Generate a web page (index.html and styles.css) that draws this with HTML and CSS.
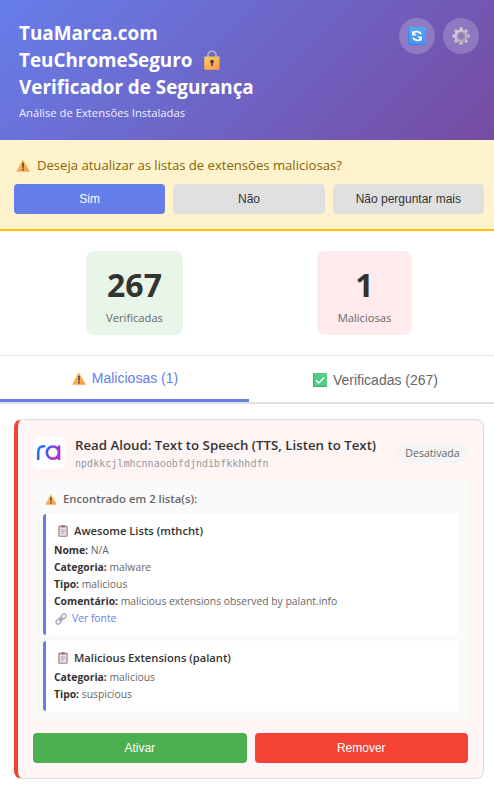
FILE: index.html
```
<!DOCTYPE html>
<html lang="pt">
<head>
<meta charset="utf-8">
<title>TeuChromeSeguro</title>
<link rel="stylesheet" href="styles.css">
</head>
<body>
<svg class="defs" width="0" height="0" aria-hidden="true">
  <defs>
    <linearGradient id="amber" x1="0" y1="0" x2="0.6" y2="1"><stop offset="0" stop-color="#fcd05a"/><stop offset="1" stop-color="#fb9f4c"/></linearGradient>
    <linearGradient id="blue" x1="0" y1="0" x2="0" y2="1"><stop offset="0" stop-color="#50a8f8"/><stop offset="1" stop-color="#4a90ee"/></linearGradient>
    <linearGradient id="steel" x1="0" y1="0" x2="1" y2="1"><stop offset="0" stop-color="#d9d2e2"/><stop offset="1" stop-color="#a79db4"/></linearGradient>
    <linearGradient id="brand" x1="0" y1="0" x2="1" y2="0.4"><stop offset="0" stop-color="#0a84ff"/><stop offset="0.5" stop-color="#4b55e8"/><stop offset="1" stop-color="#b52fd0"/></linearGradient>
    <symbol id="warn" viewBox="0 0 14 13">
      <path d="M7 .5 13.5 12Q13.8 12.7 13 12.7H1Q.2 12.7.5 12L6.2 1Q7-.1 7.8 1Z" fill="url(#amber)"/>
      <path d="M7 4.2v4" stroke="#4a3b48" stroke-width="1.5" stroke-linecap="round"/>
      <circle cx="7" cy="10.5" r=".9" fill="#4a3b48"/>
    </symbol>
    <symbol id="clip" viewBox="0 0 10 12">
      <rect x=".3" y=".8" width="9.4" height="11" rx=".8" fill="#b47c6d"/>
      <rect x="1.5" y="2" width="7" height="8.8" fill="#e5dff0"/>
      <rect x="3" y="0" width="4" height="2.7" rx=".7" fill="#8e829c"/>
      <path d="M2.7 4.7h4.6M2.7 6.5h4.6M2.7 8.3h3" stroke="#a89eb8" stroke-width=".8"/>
    </symbol>
  </defs>
</svg>

<header class="header">
  <div>
    <h1 class="title">TuaMarca.com<br>TeuChromeSeguro<svg class="lock" viewBox="0 0 16 20"><path d="M4 8V5.2a4 4 0 0 1 8 0V8" fill="none" stroke="#b4acbd" stroke-width="1.8"/><rect x=".3" y="6.4" width="15.2" height="13.3" rx="1" fill="url(#amber)"/><circle cx="8" cy="11.6" r="1.9" fill="#47384d"/><path d="M7.2 12h1.6v4H7.2z" fill="#47384d"/></svg><br>Verificador de Segurança</h1>
    <p class="subtitle">Análise de Extensões Instaladas</p>
  </div>
  <div class="tools">
    <button class="tool" aria-label="Atualizar">
      <svg width="18" height="18" viewBox="0 0 18 18"><rect width="18" height="18" rx="1.8" fill="url(#blue)"/><path d="M.4 1v15.5q.2 1 1.2 1h15" fill="none" stroke="#3d7fd2" stroke-width=".8"/><path d="M5.2 5.6A5 4.4 0 0 1 13 7.2M12.8 12.2A5 4.4 0 0 1 5 10.8" fill="none" stroke="#fff" stroke-width="1.8"/><path d="M4 3.8v4.6h4.8ZM14 14V9.4H9.2Z" fill="#fff"/></svg>
    </button>
    <button class="tool" aria-label="Definições">
      <svg width="18" height="18" viewBox="-9 -9 18 18"><g fill="#cbc2d6"><circle cy="-7.1" r="1.8"/><circle cx="5" cy="-5" r="1.8"/><circle cx="7.1" r="1.8"/><circle cx="-7.1" r="1.8"/><circle cx="-5" cy="-5" r="1.8"/><circle cx="-5" cy="5" r="1.8"/><circle cx="5" cy="5" r="1.8"/><circle cy="7.1" r="1.8"/></g><circle r="4.7" fill="none" stroke="url(#steel)" stroke-width="3.8"/><circle r="3.4" fill="none" stroke="#978ea4" stroke-width="1.2"/></svg>
    </button>
  </div>
</header>

<section class="banner">
  <p class="banner-text"><svg class="warn" width="14" height="13"><use href="#warn"/></svg>Deseja atualizar as listas de extensões maliciosas?</p>
  <div class="banner-actions">
    <button class="btn primary">Sim</button>
    <button class="btn">Não</button>
    <button class="btn">Não perguntar mais</button>
  </div>
</section>

<section class="stats">
  <div class="stat safe"><span class="num">267</span><span class="label">Verificadas</span></div>
  <div class="stat bad"><span class="num">1</span><span class="label">Maliciosas</span></div>
</section>

<nav class="tabs">
  <button class="tab active"><svg width="14" height="13"><use href="#warn"/></svg>Maliciosas (1)</button>
  <button class="tab"><svg width="14" height="14" viewBox="0 0 14 14"><rect width="14" height="14" rx=".8" fill="#50cd87"/><path d="M.3 0v13.7H14" fill="none" stroke="#399b6a" stroke-width=".8"/><path d="M3 7.3 5.8 10 11.2 4.4" fill="none" stroke="#fff" stroke-width="1.4"/></svg>Verificadas (267)</button>
</nav>

<main class="list">
  <article class="card">
    <div class="card-head">
      <div class="logo"><svg width="32" height="32" viewBox="0 0 32 32"><g fill="none" stroke="url(#brand)" stroke-width="2.6" stroke-linecap="round"><path d="M5.2 22V15.4Q5.2 8.9 11.2 9.2M26 9.5V22M26 15.6a6.1 6.1 0 1 1-12.2 0a6.1 6.1 0 1 1 12.2 0"/></g></svg></div>
      <div class="info">
        <h2 class="name">Read Aloud: Text to Speech (TTS, Listen to Text)</h2>
        <div class="id">npdkkcjlmhcnnaoobfdjndibfkkhhdfn</div>
      </div>
      <span class="badge">Desativada</span>
    </div>
    <div class="sources">
      <h3 class="found"><svg width="12" height="11"><use href="#warn"/></svg>Encontrado em 2 lista(s):</h3>
      <div class="source">
        <h4 class="source-name"><svg width="10" height="12"><use href="#clip"/></svg>Awesome Lists (mthcht)</h4>
        <p><strong>Nome:</strong> N/A</p>
        <p><strong>Categoria:</strong> malware</p>
        <p><strong>Tipo:</strong> malicious</p>
        <p><strong>Comentário:</strong> malicious extensions observed by palant.info</p>
        <a class="link"><svg width="12" height="12" viewBox="0 0 12 12" fill="none" stroke="#b5a9bd" stroke-width="1.5"><rect x="5.3" y="1.7" width="6" height="3.8" rx="1.9" transform="rotate(-45 8.3 3.6)"/><rect x=".7" y="6.4" width="6" height="3.8" rx="1.9" transform="rotate(-45 3.7 8.3)"/><path d="M4.2 7.8 7.8 4.2" stroke="#a095ac"/></svg>Ver fonte</a>
      </div>
      <div class="source">
        <h4 class="source-name"><svg width="10" height="12"><use href="#clip"/></svg>Malicious Extensions (palant)</h4>
        <p><strong>Categoria:</strong> malicious</p>
        <p><strong>Tipo:</strong> suspicious</p>
      </div>
    </div>
    <div class="card-actions">
      <button class="btn enable">Ativar</button>
      <button class="btn remove">Remover</button>
    </div>
  </article>
</main>
</body>
</html>
```
FILE: styles.css
```
* { box-sizing: border-box; margin: 0; padding: 0; }
body { font-family: "Open Sans", "Noto Sans", sans-serif; color: #333; background: #fff; white-space: nowrap; }
button { border: 0; font-family: "Liberation Sans", Arial, sans-serif; }
svg { flex: none; }
.defs { display: block; position: absolute; }

.header { display: flex; justify-content: space-between; height: 140px; padding: 20px 15px 0 19px; background: linear-gradient(135deg, #667eea 0%, #764ba2 100%); color: #fff; }
.title { font-size: 18.85px; line-height: 27px; font-weight: 700; height: 81px; }
.lock { width: 16px; height: 20px; margin-left: 12px; vertical-align: -3px; }
.subtitle { margin-top: 4px; font-size: 11.25px; line-height: 16px; opacity: .9; }
.tools { display: flex; gap: 8px; margin-top: -2px; }
.tool { display: flex; align-items: center; justify-content: center; width: 36px; height: 36px; border-radius: 50%; background: rgba(255, 255, 255, .2); }

.banner { height: 91px; padding: 14px 10px 0 14px; background: #fff3cd; border-bottom: 2px solid #ffc107; }
.banner-text { display: flex; align-items: center; height: 21px; padding-left: 2px; margin-bottom: 9px; font-size: 13.1px; color: #856404; }
.banner-text svg { margin: 2px 7px 0 0; }
.banner-actions { display: flex; gap: 8px; }
.btn { flex: 1 1 0; height: 30px; border-radius: 4px; font-size: 12px; background: #e0e0e0; color: #333; }
.btn.primary { background: #667eea; color: #fff; }

.stats { display: flex; justify-content: space-between; height: 125px; padding: 20px 82px 20px 86px; border-bottom: 1px solid #e0e0e0; }
.stat { display: flex; flex-direction: column; align-items: center; width: 97px; height: 84px; padding-top: 12px; border-radius: 8px; }
.stat.bad { width: 95px; }
.safe { background: #e8f5e9; }
.bad { background: #ffebee; }
.num { font-size: 32px; line-height: 43px; font-weight: 700; }
.label { margin-top: 4px; font-size: 11.2px; line-height: 16px; color: #666; }

.tabs { display: flex; height: 48px; border-bottom: 2px solid #e0e0e0; }
.tab { display: flex; align-items: center; justify-content: center; gap: 6px; width: 245px; padding: 2px 0 0 8px; background: none; font-size: 14px; color: #666; }
.tab.active { width: 249px; padding: 0 0 0 1px; border-bottom: 3px solid #667eea; color: #667eea; }
.tab.active svg { margin-top: 2px; }

.list { padding: 15px 10px 15px 14px; }
.card { height: 360px; padding: 17px 15px 15px; border: 1px solid #ddd; border-left: 4px solid #f44336; border-radius: 8px; background: #fff5f5; }
.card-head { display: flex; align-items: center; height: 32px; margin-bottom: 11px; }
.logo { width: 32px; height: 32px; border-radius: 5px; background: #fff; }
.info { flex: 1; margin-left: 10px; }
.name { font-size: 13.25px; line-height: 19px; font-weight: 600; }
.id { font: 10.05px/18px "DejaVu Sans Mono", monospace; margin-bottom: -2px; color: #999; }
.badge { width: 71px; height: 19px; border-radius: 10px; background: #f5f5f5; font-size: 10.55px; line-height: 19px; font-weight: 500; text-align: center; color: #666; }
.sources { height: 241px; padding: 10px; border-radius: 4px; background: #fafafa; }
.found { display: flex; align-items: center; gap: 6px; height: 16px; margin-bottom: 8px; padding-left: 2px; font-size: 11.3px; font-weight: 600; color: #666; }
.found svg { margin-top: 2px; }
.source { height: 121px; padding: 8px; border-left: 3px solid #667eea; border-radius: 3px; background: #fff; font-size: 10.35px; line-height: 17px; color: #666; }
.source + .source { height: 70px; margin-top: 6px; }
.source-name { display: flex; align-items: center; gap: 6px; height: 16px; margin-bottom: 4px; padding-left: 4px; font-size: 11.2px; font-weight: 600; color: #333; }
.source-name svg { margin-top: 2px; }
.source strong { font-weight: 700; color: #333; }
.link { display: flex; align-items: center; gap: 5px; padding-left: 1px; color: #667eea; }
.card-actions { display: flex; gap: 8px; margin-top: 12px; }
.enable { background: #4caf50; color: #fff; }
.remove { background: #f44336; color: #fff; }
```
